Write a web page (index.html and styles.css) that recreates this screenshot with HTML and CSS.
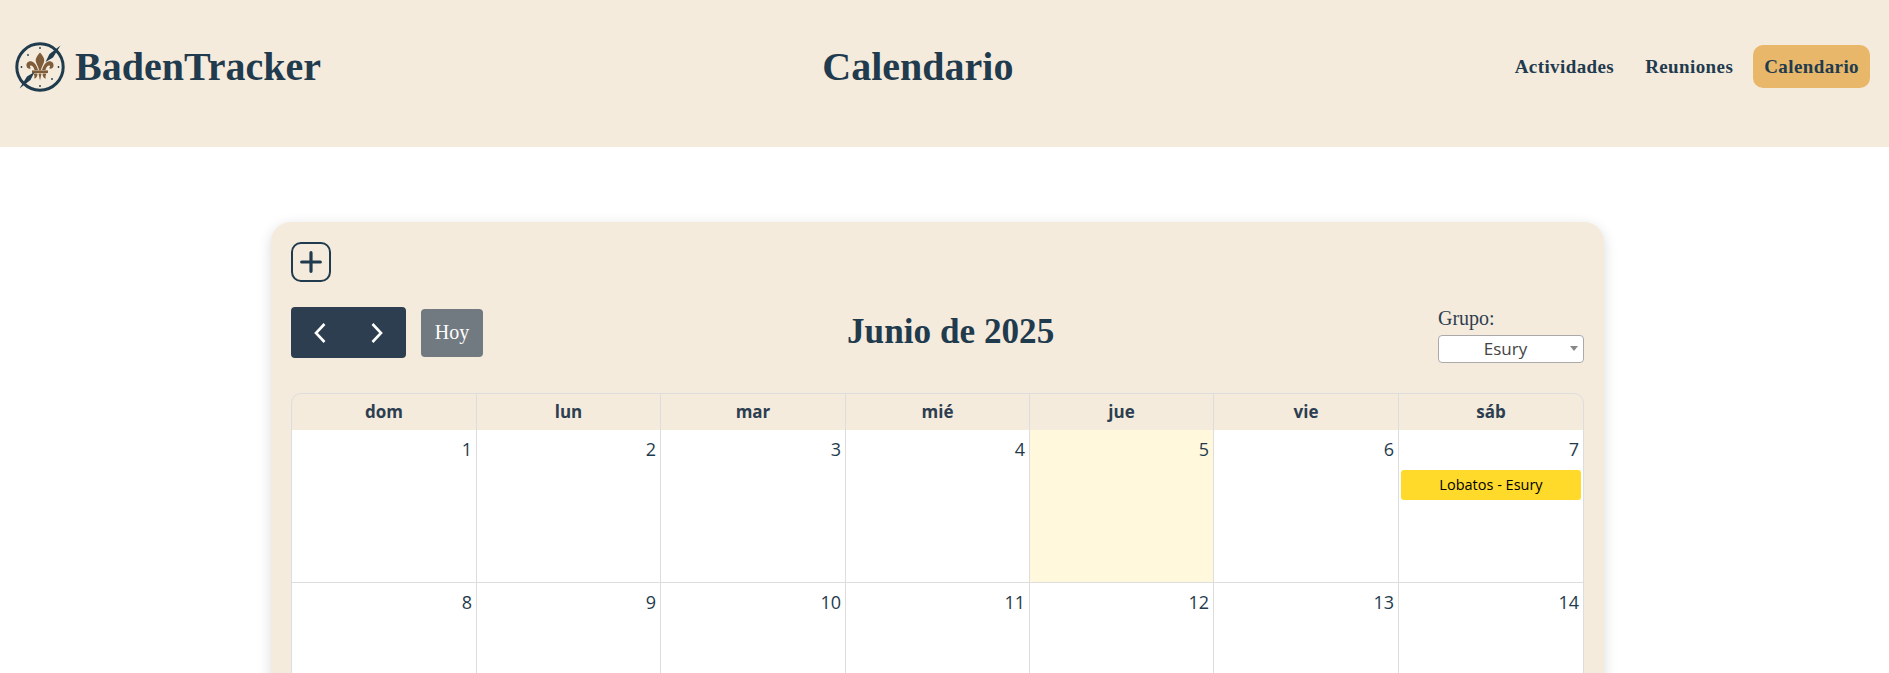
FILE: index.html
```html
<!DOCTYPE html>
<html lang="es">

<head>
  <meta charset="UTF-8">
  <meta name="viewport" content="width=device-width, initial-scale=1.0">
  <title>Calendario</title>
  <link rel="stylesheet" href="styles.css">
</head>

<body>
  <header class="topbar">
    <a class="brand" href="#">
      <svg class="brand-logo" viewBox="0 0 50 50">
        <circle cx="25" cy="25" r="23.2" fill="none" stroke="#1f3b4d" stroke-width="3" />
        <g fill="#7f5c3a">
          <path d="M25 10.500 C22 14 20 17 21 20 C21.800 23 23.500 25 24 28 L26 28 C26.500 25 28.200 23 29 20 C30 17 28 14 25 10.500 Z" />
          <path d="M23 28 C22 24 20 20.500 17 19.500 C13.500 18.500 11 21 11.500 24 C12 26.500 14.500 27.500 16 26 C15 25.500 14.500 24 15.500 23.500 C17.500 22.800 19 26 19.500 28 Z" />
          <path transform="matrix(-1 0 0 1 50 0)" d="M23 28 C22 24 20 20.500 17 19.500 C13.500 18.500 11 21 11.500 24 C12 26.500 14.500 27.500 16 26 C15 25.500 14.500 24 15.500 23.500 C17.500 22.800 19 26 19.500 28 Z" />
          <rect x="17" y="28.400" width="16" height="2.600" />
          <path d="M23.500 31.500 L26.500 31.500 L25 38.500 Z" />
          <path d="M18.500 31.500 L22.500 31.500 C22.500 35 21 36.500 19 36.500 C20 35 19.500 33.500 18.500 31.500 Z" />
          <path transform="matrix(-1 0 0 1 50 0)" d="M18.500 31.500 L22.500 31.500 C22.500 35 21 36.500 19 36.500 C20 35 19.500 33.500 18.500 31.500 Z" />
        </g>
        <g fill="#1f3b4d">
          <circle cx="25" cy="6" r="0.9" />
          <circle cx="25" cy="44" r="0.9" />
          <circle cx="6.500" cy="25" r="0.9" />
          <circle cx="43.500" cy="25" r="0.9" />
          <circle cx="37" cy="37" r="0.9" />
          <circle cx="13" cy="13" r="0.9" />
          <path d="M45.500 3.500 L34.500 12 L30.500 20 L38 15.500 Z" />
          <path d="M4.500 46.500 L15.500 38 L19.500 30 L12 34.500 Z" />
        </g>
      </svg>
      <span>BadenTracker</span>
    </a>
    <h1 class="page-title">Calendario</h1>
    <nav class="mainnav">
      <a href="#">Actividades</a>
      <a href="#">Reuniones</a>
      <a class="active" href="#">Calendario</a>
    </nav>
  </header>

  <main class="content">
    <section class="card">
      <button class="add-btn" type="button">
        <svg viewBox="0 0 24 24">
          <path d="M12 5 V19 M5 12 H19" />
        </svg>
      </button>

      <div class="toolbar">
        <div class="toolbar-left">
          <div class="nav-group">
            <button type="button">
              <svg viewBox="0 0 16 24"><path d="M12.500 3 L4 12 L12.500 21" /></svg>
            </button>
            <button type="button">
              <svg viewBox="0 0 16 24"><path d="M3.500 3 L12 12 L3.500 21" /></svg>
            </button>
          </div>
          <button class="today-btn" type="button">Hoy</button>
        </div>
        <h2 class="month-title">Junio de 2025</h2>
        <div class="toolbar-right">
          <label class="group-label">Grupo:</label>
          <div class="group-select">Esury</div>
        </div>
      </div>

      <div class="calendar">
        <div class="dayname">dom</div>
        <div class="dayname">lun</div>
        <div class="dayname">mar</div>
        <div class="dayname">mié</div>
        <div class="dayname">jue</div>
        <div class="dayname">vie</div>
        <div class="dayname">sáb</div>

        <div class="day"><div class="day-num">1</div></div>
        <div class="day"><div class="day-num">2</div></div>
        <div class="day"><div class="day-num">3</div></div>
        <div class="day"><div class="day-num">4</div></div>
        <div class="day today"><div class="day-num">5</div></div>
        <div class="day"><div class="day-num">6</div></div>
        <div class="day">
          <div class="day-num">7</div>
          <div class="event">Lobatos - Esury</div>
        </div>

        <div class="day"><div class="day-num">8</div></div>
        <div class="day"><div class="day-num">9</div></div>
        <div class="day"><div class="day-num">10</div></div>
        <div class="day"><div class="day-num">11</div></div>
        <div class="day"><div class="day-num">12</div></div>
        <div class="day"><div class="day-num">13</div></div>
        <div class="day"><div class="day-num">14</div></div>
      </div>
    </section>
  </main>
</body>

</html>
```

FILE: styles.css
```css
* {
  margin: 0;
  padding: 0;
  box-sizing: border-box;
}

body {
  font-family: "Liberation Serif", serif;
  color: #1f3b4d;
  background-color: #fff;
}

a {
  color: inherit;
  text-decoration: none;
}

button {
  border: none;
  cursor: pointer;
}

/* cabecera */
.topbar {
  height: 147px;
  padding: 0 19px 14px 15px;
  background-color: #f5ebdd;
  display: flex;
  justify-content: space-between;
  align-items: center;
}

.brand {
  display: flex;
  align-items: center;
  gap: 10px;
  font-size: 40px;
  font-weight: bold;
}

.brand-logo {
  width: 50px;
  height: 50px;
}

.page-title {
  margin-left: 11px;
  font-size: 40px;
  font-weight: bold;
}

.mainnav {
  display: flex;
  align-items: center;
  gap: 9px;
  font-size: 19px;
  font-weight: bold;
  letter-spacing: 0.4px;
}

.mainnav a {
  padding: 0 11px;
  line-height: 43px;
  border-radius: 10px;
}

.mainnav .active {
  background-color: #e8b769;
}

/* tarjeta */
.content {
  padding: 75px 285px 40px 271px;
}

.card {
  padding: 20px;
  background-color: #f5ebdd;
  border-radius: 20px;
  box-shadow: 0 4px 14px rgba(0, 0, 0, 0.15);
}

.add-btn {
  display: block;
  width: 40px;
  height: 40px;
  border: 2px solid #1f3b4d;
  border-radius: 10px;
  background: none;
  padding: 2px;
}

.add-btn svg {
  display: block;
  width: 100%;
  height: 100%;
}

.add-btn path {
  fill: none;
  stroke: #1f3b4d;
  stroke-width: 2.4;
  stroke-linecap: round;
}

.toolbar {
  margin-top: 24px;
  margin-bottom: 30px;
  display: flex;
  align-items: flex-start;
}

.toolbar-left {
  margin-top: 1px;
  display: flex;
  align-items: center;
  gap: 15px;
}

.nav-group {
  display: flex;
  width: 115px;
  height: 51px;
  background-color: #2c3e50;
  border-radius: 4px;
}

.nav-group button {
  flex: 1;
  background: none;
  display: flex;
  align-items: center;
  justify-content: center;
}

.nav-group svg {
  width: 16px;
  height: 24px;
}

.nav-group path {
  fill: none;
  stroke: #fff;
  stroke-width: 2.6;
}

.today-btn {
  width: 62px;
  height: 48px;
  background-color: #6c757d;
  color: #fff;
  border-radius: 4px;
  font-family: "Liberation Serif", serif;
  font-size: 20px;
  opacity: 0.95;
}

.month-title {
  margin-left: 364px;
  font-size: 35.2px;
  font-weight: bold;
  line-height: 51px;
}

.toolbar-right {
  margin-left: auto;
  width: 146px;
  font-size: 20px;
}

.group-label {
  display: block;
  line-height: 24px;
  margin-bottom: 5px;
  color: #2c3e50;
}

.group-select {
  position: relative;
  height: 28px;
  border: 1px solid #aaa;
  border-radius: 4px;
  background-color: #fff;
  padding-right: 11px;
  font-family: "Open Sans", sans-serif;
  font-size: 17px;
  line-height: 26px;
  text-align: center;
  color: #444;
}

.group-select::after {
  content: "";
  position: absolute;
  top: 10px;
  right: 5px;
  border-left: 4px solid transparent;
  border-right: 4px solid transparent;
  border-top: 5px solid #888;
}

/* calendario */
.calendar {
  display: grid;
  grid-template-columns: 184px 184px 185px 184px 184px 185px 1fr;
  grid-template-rows: 36px;
  grid-auto-rows: 153px;
  border: 1px solid #ddd;
  border-radius: 10px;
  font-family: "Open Sans", sans-serif;
  overflow: hidden;
}

.dayname {
  border-left: 1px solid #ddd;
  font-size: 17px;
  font-weight: bold;
  line-height: 36px;
  text-align: center;
  color: #2c3e50;
}

.dayname:nth-child(7n + 1),
.day:nth-child(7n + 1) {
  border-left: none;
}

.day {
  border-left: 1px solid #ddd;
  border-bottom: 1px solid #ddd;
  background-color: #fff;
  padding: 5px 2px 0;
  font-size: 18px;
}

.day-num {
  padding-right: 2px;
  line-height: 29px;
  text-align: right;
}

.today {
  background-color: #fff8dc;
}

.event {
  margin-top: 6px;
  height: 30px;
  background-color: #ffda2b;
  border-radius: 3px;
  font-size: 14.5px;
  line-height: 30px;
  text-align: center;
  color: #000;
}
```
